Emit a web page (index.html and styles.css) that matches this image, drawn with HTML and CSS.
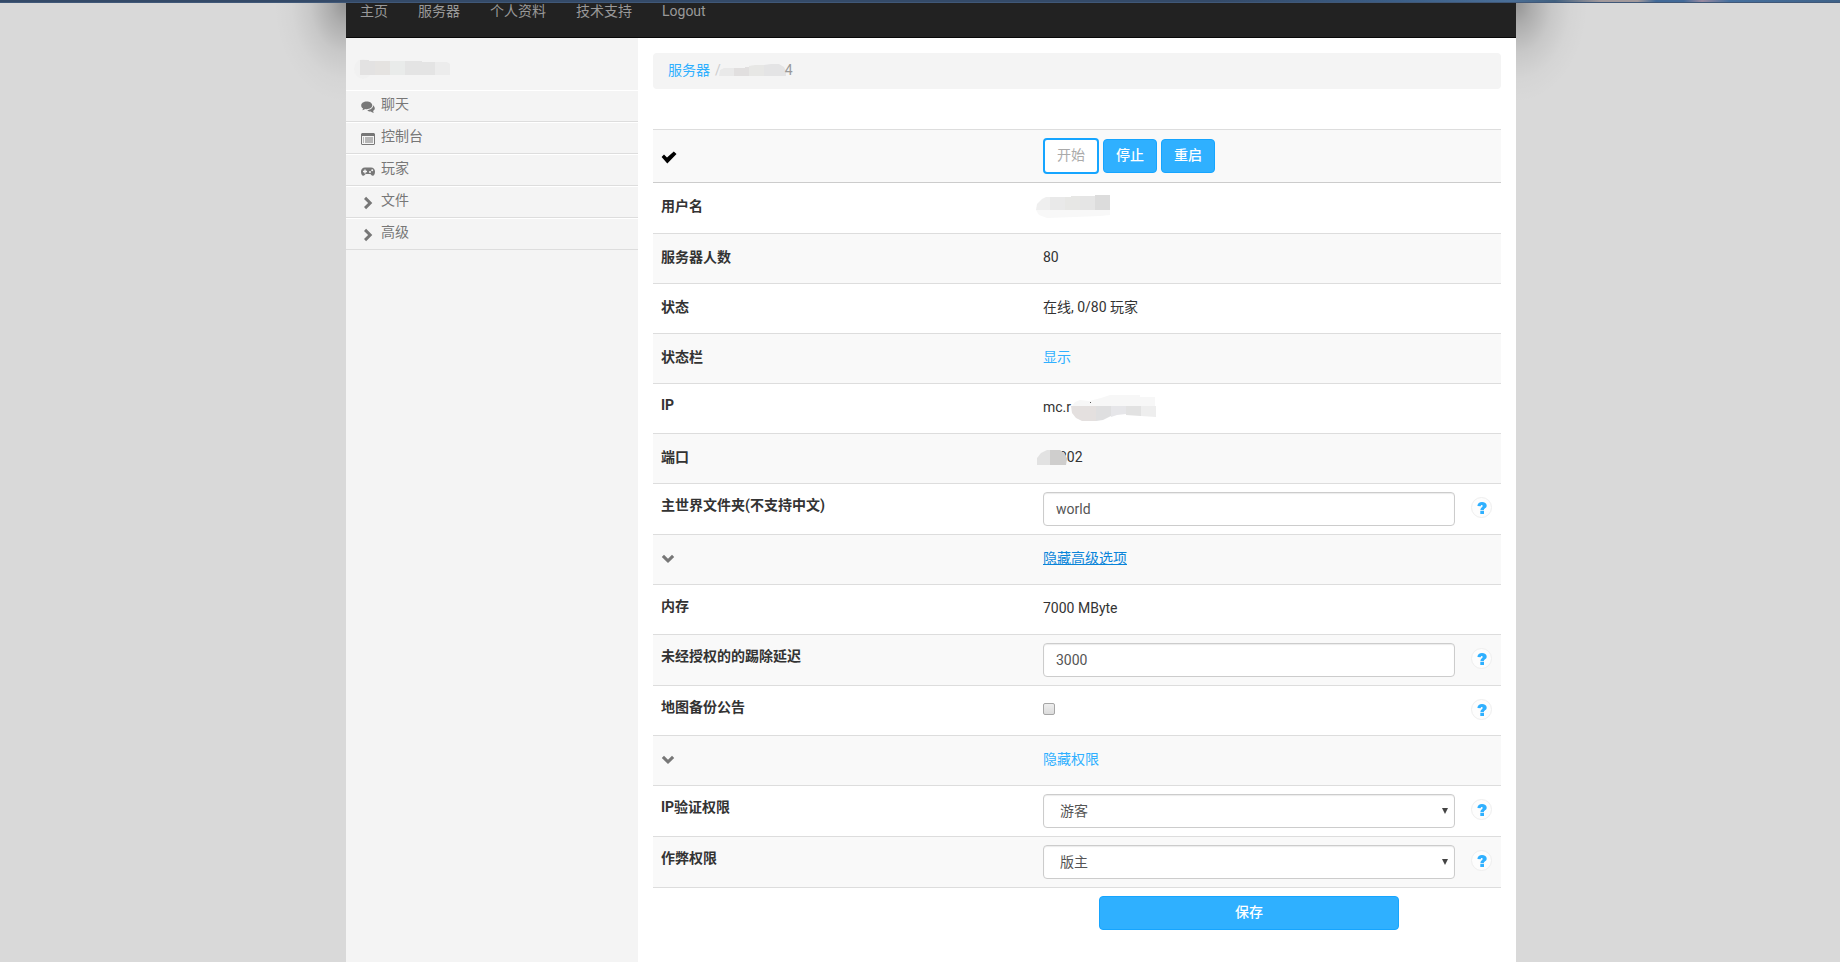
FILE: index.html
```html
<!DOCTYPE html>
<html lang="zh-CN">
<head>
<meta charset="utf-8">
<title>服务器</title>
<link rel="stylesheet" href="styles.css">
</head>
<body>
<svg class="sprite" aria-hidden="true">
  <symbol id="question" viewBox="0 0 10 12"><path d="M.4 3.900C.6 1.300 2.400 0 5 0c2.700 0 4.700 1.300 4.700 3.500 0 2.800-2.700 2.700-2.800 4.400H3.400C3.400 5.500 5.700 5.200 5.700 3.900c0-.6-.3-.9-.9-.9-.7 0-1 .4-1.100 1.200zM3.300 8.700h3.700V12H3.300z"/></symbol>
  <symbol id="down" viewBox="0 0 14 10"><path d="M.8 2.900 3 .8l4 3.900L11 .8l2.200 2.100L7 9z"/></symbol>
  <symbol id="right" viewBox="0 0 14 14"><path d="M3 2.900 5.100.8l6.200 6.200-6.200 6.200L3 11.100 7.100 7z"/></symbol>
</svg>
<div class="wallpaper"></div>
<div class="shell">
  <div class="page">
    <nav class="topbar">
      <a href="#">主页</a>
      <a href="#">服务器</a>
      <a href="#">个人资料</a>
      <a href="#">技术支持</a>
      <a href="#">Logout</a>
    </nav>
    <div class="columns">
      <aside class="sidebar">
        <div class="owner">
          <svg width="98" height="20" viewBox="0 0 98 20" aria-hidden="true"><ellipse cx="9" cy="10" rx="9" ry="10" fill="#f1f1f1"/><path fill="#e3e2e2" d="M6 1h9v1h6v14H6z"/><path fill="#e5e3e1" d="M21 2h15v14H21z"/><path fill="#e9ebea" d="M36 2h15v14H36z"/><path fill="#e4e4e4" d="M51 2h17v1h13v13H51z"/><path fill="#ececec" d="M81 3h12l3 2v11H81z"/></svg>
        </div>
        <ul class="menu">
          <li><a href="#"><svg width="14" height="14" viewBox="0 0 14 14"><path d="M5.700 1.500C2.600 1.500.2 3.200.2 5.400c0 1.300.7 2.300 1.900 3-.1.800-.5 1.400-1 1.900 1.300-.1 2.300-.6 3.100-1.300.5.1 1 .2 1.500.2 3.100 0 5.600-1.700 5.600-3.900S8.800 1.500 5.700 1.500z"/><path d="M12.100 5.300c.2 2.500-2.400 4.600-5.900 4.900.8.900 2.100 1.300 3.600 1.200.9.800 2 1.300 3.200 1.400-.5-.5-.8-1.200-.9-1.900 1.100-.5 1.700-1.300 1.700-2.300 0-1.400-.7-2.500-1.700-3.300z"/></svg>聊天</a></li>
          <li><a href="#"><svg width="14" height="14" viewBox="0 0 14 14"><path fill-rule="evenodd" d="M1 1h12l1 1v10l-1 1H1l-1-1V2zM1 4v8h12V4z"/><path opacity=".5" d="M2 5h1v6H2zM4 5h8v6H4z"/></svg>控制台</a></li>
          <li><a href="#"><svg width="14" height="14" viewBox="0 0 14 14"><path fill-rule="evenodd" d="M4 3.500h6c2.500 0 4 1.700 4 4 0 2.400-.8 4.300-2.300 4.300-1.300 0-1.500-1.900-2.700-1.900H5c-1.200 0-1.400 1.900-2.700 1.900C.8 11.800 0 9.900 0 7.500c0-2.300 1.500-4 4-4zM3.300 5.500v1.300H2v1.400h1.300v1.300h1.400V8.200H6V6.800H4.700V5.500zM11.200 5.200a1 1 0 1 0 0 2 1 1 0 0 0 0-2zM9 7a1 1 0 1 0 0 2 1 1 0 0 0 0-2z"/></svg>玩家</a></li>
          <li><a href="#"><svg width="14" height="14"><use href="#right"/></svg>文件</a></li>
          <li><a href="#"><svg width="14" height="14"><use href="#right"/></svg>高级</a></li>
        </ul>
      </aside>
      <main class="content">
        <div class="breadcrumb"><a href="#">服务器</a><span class="slash">/</span><svg class="crumb-mask" width="68" height="16" viewBox="0 0 68 16" aria-hidden="true"><path fill="#e9e9e9" d="M0 14 1 8l4-2h10v8z"/><path fill="#e1dfdf" d="M15 6h11V5h4v9H15z"/><path fill="#e7e7e5" d="M30 4l6-1h9v11H30z"/><path fill="#e4e4e5" d="M45 3l7-1 8 0 5 3 2 4v5H45z"/></svg><span>4</span></div>
        <form>
        <table class="settings">
          <colgroup><col class="c-label"><col><col class="c-help"></colgroup>
          <tbody>
          <tr class="status"><th><svg class="check" width="16" height="13" viewBox="0 0 16 13"><path d="M.6 6 3 3.600l3 2.800L12.800.6l2.700 2.500L6.300 12.400z"/></svg></th><td><div class="actions"><button type="button" class="btn start" disabled>开始</button><button type="button" class="btn">停止</button><button type="button" class="btn">重启</button></div></td><td></td></tr>
          <tr class="user"><th>用户名</th><td><svg class="mask user-mask" width="74" height="24" viewBox="0 0 74 24" aria-hidden="true"><path fill="#f8f8f8" d="M0 15h74v5l-10 1-25 1-28 1-8-3z"/><path fill="#efefef" d="M0 15l1-6 5-5 4-2h4v13z"/><path fill="#e9e9e9" d="M14 2h15v13H14z"/><path fill="#e7e7e5" d="M29 2h6V1h9v14H29z"/><path fill="#e5e5e5" d="M44 1h15v14H44z"/><path fill="#dcdcdc" d="M59 0h15v15H59z"/></svg></td><td></td></tr>
          <tr><th>服务器人数</th><td>80</td><td></td></tr>
          <tr><th>状态</th><td>在线, 0/80 玩家</td><td></td></tr>
          <tr><th>状态栏</th><td><a href="#">显示</a></td><td></td></tr>
          <tr><th class="upper">IP</th><td>mc.r<svg class="mask ip-mask" width="86" height="28" viewBox="0 0 86 28" aria-hidden="true"><path fill="#f7f7f7" d="M2 11 5 7l5-2 9 1 12-3 9-3h30v2h15v10H2z"/><path fill="#e4e0df" d="M1 11h25v15H12l-6-3-4-5z"/><path fill="#dfdfe0" d="M26 11h15v10l-8 4-7 1z"/><path fill="#e6e6e9" d="M41 11h15v8l-9 1-6 2z"/><path fill="#e2e2e2" d="M56 11h15v10l-15-1z"/><path fill="#eee" d="M71 11h15v11l-15-1z"/><path fill="#555" d="M20 7h1v1h-1z"/></svg></td><td></td></tr>
          <tr><th>端口</th><td><svg class="mask port-mask" width="30" height="16" viewBox="0 0 30 16" aria-hidden="true"><path fill="#e2e2e2" d="M0 15V8l4-5 6-3h4v15z"/><path fill="#cfcecd" d="M13 0h10l5 4 2 5-1 6H13z"/></svg>802</td><td></td></tr>
          <tr class="field"><th><label for="world">主世界文件夹(不支持中文)</label></th><td><input class="control" id="world" type="text" value="world"></td><td><a class="help" href="#" aria-label="帮助"><svg width="10" height="12"><use href="#question"/></svg></a></td></tr>
          <tr><th><svg class="fold" width="14" height="10"><use href="#down"/></svg></th><td><a class="hovered" href="#">隐藏高级选项</a></td><td></td></tr>
          <tr><th class="upper">内存</th><td>7000 MByte</td><td></td></tr>
          <tr class="field"><th><label for="delay">未经授权的的踢除延迟</label></th><td><input class="control" id="delay" type="text" value="3000"></td><td><a class="help" href="#" aria-label="帮助"><svg width="10" height="12"><use href="#question"/></svg></a></td></tr>
          <tr class="toggle"><th class="upper"><label for="announce">地图备份公告</label></th><td><input class="tick" id="announce" type="checkbox"></td><td><a class="help" href="#" aria-label="帮助"><svg width="10" height="12"><use href="#question"/></svg></a></td></tr>
          <tr><th><svg class="fold" width="14" height="10"><use href="#down"/></svg></th><td><a href="#">隐藏权限</a></td><td></td></tr>
          <tr class="field"><th><label for="ip-role">IP验证权限</label></th><td><div class="picker"><select class="control" id="ip-role"><option>游客</option></select></div></td><td><a class="help" href="#" aria-label="帮助"><svg width="10" height="12"><use href="#question"/></svg></a></td></tr>
          <tr class="field"><th><label for="cheat-role">作弊权限</label></th><td><div class="picker"><select class="control" id="cheat-role"><option>版主</option></select></div></td><td><a class="help" href="#" aria-label="帮助"><svg width="10" height="12"><use href="#question"/></svg></a></td></tr>
          <tr class="submit"><th></th><td><button type="submit" class="btn save">保存</button></td><td></td></tr>
          </tbody>
        </table>
        </form>
      </main>
    </div>
  </div>
</div>
</body>
</html>
```
FILE: styles.css
```css
* { box-sizing: border-box; }

body {
  margin: 0;
  min-height: 100vh;
  display: flex;
  flex-direction: column;
  background: #d9d9d9;
  color: #333;
  font: 14px/20px Roboto, "Noto Sans CJK SC", sans-serif;
}

a { color: #2fb0ff; text-decoration: none; }
.sprite { display: none; }

.wallpaper {
  height: 3px;
  border-bottom: 1px solid #405878;
  background: linear-gradient(90deg, #344a68 0%, #344a68 66%, #3c5f88 76%, #4a6f98 82%, #41607f 84.500%, #a39a9c 87%, #a39a9c 89%, #426a98 90%, #426a98 91.500%, #9a8aa0 92.500%, #46709e 94%, #3f6288 100%);
}

.shell {
  flex: 1;
  display: flex;
  justify-content: center;
  padding-left: 22px;
  overflow: hidden;
}

.page {
  position: relative;
  width: 100%;
  max-width: 1170px;
  display: flex;
  flex-direction: column;
  background: #fff;
}

/* soft shadow cast by the top bar on both gutters */
.page::before,
.page::after {
  content: "";
  position: absolute;
  top: 0;
  width: 72px;
  height: 100px;
}
.page::before {
  right: 100%;
  background: radial-gradient(ellipse 72px 100px at top right, rgba(0, 0, 0, .32), rgba(0, 0, 0, .2) 22%, rgba(0, 0, 0, .08) 50%, rgba(0, 0, 0, .02) 76%, transparent);
}
.page::after {
  left: 100%;
  background: radial-gradient(ellipse 72px 100px at top left, rgba(0, 0, 0, .32), rgba(0, 0, 0, .2) 22%, rgba(0, 0, 0, .08) 50%, rgba(0, 0, 0, .02) 76%, transparent);
}

.topbar {
  display: flex;
  padding: 0 14px 18px;
  border-bottom: 1px solid #080808;
  background: #222;
  gap: 30px;
  line-height: 16px;
}
.topbar a { color: #999; }

.columns { flex: 1; display: flex; }

.sidebar { width: 292px; flex: none; background: #f4f4f4; }
.owner { height: 52px; padding: 21px 8px 0; }
.owner svg { display: block; }
.menu { margin: 0; padding: 0; list-style: none; }
.menu a {
  display: flex;
  align-items: center;
  gap: 6px;
  height: 32px;
  padding: 0 14px 4px;
  border-top: 1px solid #fff;
  border-bottom: 1px solid #ddd;
  color: #777;
}
.menu svg { margin: 5px 0 0 1px; fill: #777; }

.content { flex: 1; min-width: 0; padding: 15px; }

.breadcrumb {
  display: flex;
  align-items: center;
  height: 36px;
  margin-bottom: 40px;
  padding: 0 15px 2px;
  border-radius: 4px;
  background: #f4f4f4;
  color: #999;
}
.breadcrumb .slash { padding-left: 5px; color: #ccc; }
.crumb-mask { margin: 0 -2px; }

.settings {
  width: 100%;
  table-layout: fixed;
  border-collapse: separate;
  border-spacing: 0;
}
.c-label { width: 382px; }
.c-help { width: 38px; }
.settings th,
.settings td {
  height: 50px;
  padding: 13px 8px 8px;
  border-top: 1px solid #ddd;
  vertical-align: top;
  text-align: left;
}
.settings th { font-weight: 700; }
.settings tr:nth-child(odd) > * { background: #f9f9f9; }
.settings .upper { padding-top: 11px; }
.settings .status > * { height: 53px; }
.settings .status td { padding: 8px; }
.settings .user > * { height: 51px; border-top-color: #ccc; }
.settings .field > * { height: 51px; }
.settings .field th { padding-top: 11px; }
.settings .field td { padding: 8px; }
.settings .submit > * { padding: 8px; background: #fff; }

.check { display: block; margin-top: 8px; fill: #000; }
.fold { display: block; margin-top: 6px; fill: #777; }
.hovered { color: #0a85d9; text-decoration: underline; }

.actions { display: flex; align-items: center; gap: 4px; height: 36px; }
.btn {
  height: 34px;
  padding: 0 12px 2px;
  border: 1px solid #16a5ff;
  border-radius: 4px;
  background: #2fb0ff;
  color: #fff;
  font: inherit;
  font-weight: 500;
}
.btn.start {
  height: 36px;
  border-width: 2px;
  background: #fff;
  color: #aaa;
  font-weight: 400;
}
.btn.save { display: block; width: 300px; margin: 0 auto; }

.mask { vertical-align: top; }
.user-mask { display: block; margin: -1px 0 0 -7px; }
.ip-mask { margin: -2px 0 -6px -1px; }
.port-mask { position: relative; margin: 3px -8px 0 -6px; }

.control {
  display: block;
  width: 100%;
  height: 34px;
  padding: 0 12px;
  border: 1px solid #ccc;
  border-radius: 4px;
  background: #fff;
  box-shadow: inset 0 1px 1px rgba(0, 0, 0, .08);
  color: #555;
  font: inherit;
}
select.control { padding-left: 16px; appearance: none; }
.picker { position: relative; }
.picker::after {
  content: "";
  position: absolute;
  top: 14px;
  right: 7px;
  border: 3px solid transparent;
  border-top: 6px solid #444;
  border-bottom: 0;
  pointer-events: none;
}

.tick {
  display: block;
  width: 12px;
  height: 12px;
  margin: 4px 0 0;
  appearance: none;
  border: 1px solid #a6a6a6;
  border-radius: 2px;
  background: linear-gradient(#eee, #dcdcdc);
}

.help {
  display: flex;
  align-items: center;
  justify-content: center;
  width: 21px;
  height: 21px;
  margin-top: 5px;
  border: 1px solid #eee;
  border-radius: 50%;
  background: #fdfdfd;
}
.help svg { fill: #2fb0ff; }
.settings .toggle td:last-child { padding-top: 8px; }
```
